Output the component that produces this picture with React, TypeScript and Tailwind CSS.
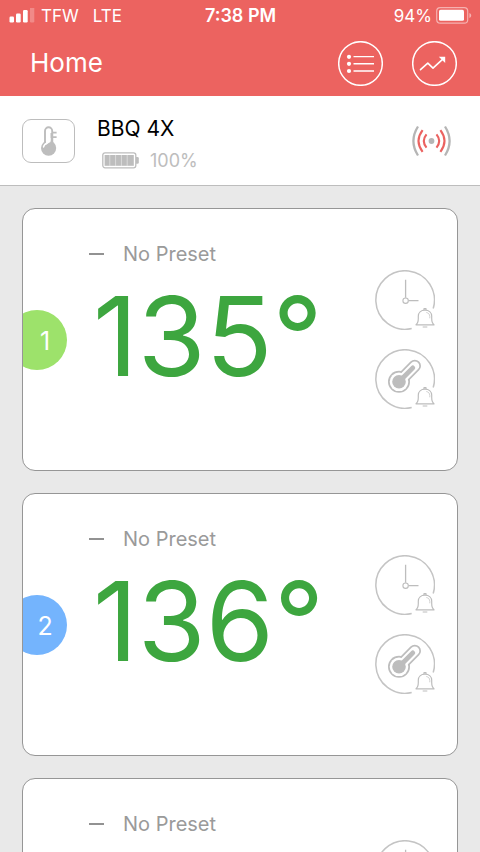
import React from "react";

type Reading = { label: string; temperature: string; badge: string };
type Probe = { id: string; reading?: Reading };

const probes: Probe[] = [
  { id: "probe-a", reading: { label: "1", temperature: "135°", badge: "bg-[#9de26b]" } },
  { id: "probe-b", reading: { label: "2", temperature: "136°", badge: "bg-[#74b4fd]" } },
  { id: "probe-c" },
];

function StatusBar() {
  return (
    <div className="grid h-8 grid-cols-3 items-center pl-[9px] pr-2 text-[17px] leading-5">
      <div className="flex items-center">
        <svg width="26" height="16" viewBox="0 0 26 16" fill="currentColor" aria-hidden="true">
          <rect x="0.5" y="8.5" width="4.5" height="6" rx="1.2" />
          <rect x="7" y="5.5" width="4.7" height="9" rx="1.2" />
          <rect x="14" y="2" width="4.7" height="12.5" rx="1.2" />
          <rect x="21" y="-1" width="4.3" height="15.5" rx="1.2" opacity="0.25" />
        </svg>
        <span className="ml-1.5">TFW</span>
        <span className="ml-3.5">LTE</span>
      </div>
      <div className="text-center text-[18px] font-semibold">7:38 PM</div>
      <div className="flex items-center justify-end gap-1">
        <span>94%</span>
        <svg width="36" height="18" viewBox="0 0 36 18" aria-hidden="true">
          <rect x="0.7" y="0.6" width="31" height="15.6" rx="3.5" fill="none" stroke="#fff" strokeWidth="1.2" opacity="0.5" />
          <rect x="3" y="2.8" width="25" height="11" rx="1.6" fill="#fff" />
          <path d="M33.4 5.9c2.4 1 2.4 4 0 5z" fill="#fff" opacity="0.5" />
        </svg>
      </div>
    </div>
  );
}

function ListIcon() {
  return (
    <svg width="45" height="45" viewBox="0 0 45 45" fill="none" stroke="#fff" aria-hidden="true">
      <circle cx="22.5" cy="22.5" r="21.8" strokeWidth="1.5" />
      <g fill="#fff" stroke="none">
        <circle cx="11" cy="15.8" r="2.1" />
        <circle cx="11" cy="22.8" r="2.1" />
        <circle cx="11" cy="30" r="2.1" />
      </g>
      <path d="M15.5 15.6h20.5M15.5 22.8h20.5M15.5 30h20.5" strokeWidth="1.4" />
    </svg>
  );
}

function TrendIcon() {
  return (
    <svg width="45" height="45" viewBox="0 0 45 45" fill="none" stroke="#fff" aria-hidden="true">
      <circle cx="22.5" cy="22.5" r="21.8" strokeWidth="1.5" />
      <path d="M8.5 28.7l7.3-6.6 5.2 5 9.5-8.8" strokeWidth="1.6" strokeLinejoin="round" strokeLinecap="round" />
      <path d="M26.8 15.7h6.4v6.2z" fill="#fff" stroke="none" />
    </svg>
  );
}

function DeviceIcon() {
  return (
    <svg width="20" height="30" viewBox="0 0 20 30" fill="none" aria-hidden="true">
      <path d="M13.2 18.5V4.9a3.6 3.6 0 0 0-7.2 0v11.9" stroke="#bdbdbd" strokeWidth="1.9" />
      <path d="M13 6.6h4.6M13 11.1h4.6" stroke="#bdbdbd" strokeWidth="1.9" />
      <path d="M11.5 7v10h2.6V7z" fill="#bdbdbd" />
      <circle cx="9.6" cy="22.1" r="7.6" fill="#bdbdbd" />
      <path d="M7 12v6.5l4.5-2.5V12z" fill="#fff" />
      <path d="M4.5 21a5 5 0 0 1 3.6-3.8" stroke="#fff" strokeWidth="1.4" strokeLinecap="round" />
    </svg>
  );
}

function DeviceBattery() {
  return (
    <svg width="38" height="17" viewBox="0 0 38 17" fill="none" aria-hidden="true">
      <rect x="0.8" y="0.8" width="33" height="15" rx="2.2" stroke="#bdbdbd" strokeWidth="1.3" />
      <rect x="2.6" y="3" width="29.2" height="10.8" fill="#bdbdbd" />
      <path d="M7.8 3v11M13.6 3v11M19.4 3v11M25.2 3v11" stroke="#e2e2e2" strokeWidth="0.8" />
      <path d="M34 5h1.5q1.3 0 1.3 1.3v4.2q0 1.3-1.3 1.3H34z" fill="#bdbdbd" />
    </svg>
  );
}

function SignalIcon() {
  return (
    <svg width="40" height="32" viewBox="0 0 40 32" fill="none" aria-label="Signal strength" role="img">
      <circle cx="19.5" cy="16" r="2.9" fill="#b5b5b5" />
      <g stroke="#eb6260" strokeWidth="2.1">
        <path d="M14.5 9.4q-5.4 6.6 0 13.2M24.5 9.4q5.4 6.6 0 13.2" />
        <path d="M10.6 5.2q-8.2 10.8 0 21.6M28.4 5.2q8.2 10.8 0 21.6" />
      </g>
      <path d="M6 1.5q-9.2 14.5 0 29M33 1.5q9.2 14.5 0 29" stroke="#b5b5b5" strokeWidth="2.3" />
    </svg>
  );
}

function AlarmFrame() {
  return (
    <>
      <path d="M36.7 58.6A29.3 29.3 0 1 1 58.2 38.5" stroke="#c4c4c4" strokeWidth="1.5" />
      <g stroke="#bdbdbd" strokeWidth="1.2" strokeLinejoin="round">
        <path d="M41 54.8c2-1.4 2.3-3.1 2.3-6.2v-2.3c0-3.6 2.6-6.1 6.7-6.1s6.7 2.5 6.7 6.1v2.3c0 3.1.3 4.8 2.3 6.2z" />
        <path d="M49 40v-1.3h2V40M47.7 57h4.6" />
        <path d="M51.3 42.5c2.2.4 3.4 1.7 3.5 4v1.8" strokeWidth="0.7" />
      </g>
    </>
  );
}

function TimerIcon() {
  return (
    <svg width="60" height="60" viewBox="0 0 60 60" fill="none" aria-hidden="true">
      <AlarmFrame />
      <path d="M30.6 9.8v18M33.5 30.7h10" stroke="#bdbdbd" strokeWidth="1.3" />
      <circle cx="30.6" cy="30.7" r="2.7" stroke="#bdbdbd" strokeWidth="1.1" />
    </svg>
  );
}

function TemperatureIcon() {
  return (
    <svg width="60" height="60" viewBox="0 0 60 60" fill="none" aria-hidden="true">
      <AlarmFrame />
      <g strokeLinecap="round">
        <path d="M24 32.8L39.8 16.9" stroke="#bdbdbd" strokeWidth="12.4" />
        <circle cx="24" cy="32.8" r="11" fill="#bdbdbd" />
        <path d="M24 32.8L39.8 16.9" stroke="#fff" strokeWidth="9" />
        <circle cx="24" cy="32.8" r="9.3" fill="#fff" />
        <path d="M24 32.8L37.8 18.9" stroke="#bdbdbd" strokeWidth="4.8" />
        <circle cx="24" cy="32.8" r="6.8" fill="#bdbdbd" />
      </g>
    </svg>
  );
}

function ProbeCard({ reading }: { reading?: Reading }) {
  return (
    <section className="flex h-[263px] shrink-0 items-center overflow-hidden rounded-[13px] border border-[#969696] bg-white pr-[22px]">
      <div
        className={`-ml-4 flex size-[60px] shrink-0 items-center justify-center rounded-full pl-4 pt-0.5 text-[25px] leading-8 text-white ${reading ? reading.badge : "bg-[#c4c4c4]"}`}
      >
        {reading?.label}
      </div>
      <div className="flex flex-1 flex-col gap-[27px] self-stretch pl-[22px] pt-[30px]">
        <div className="flex items-center gap-[19px] text-[20px] leading-[30px] text-[#9a9a9a]">
          <span className="h-0.5 w-[15px] bg-[#929292]" />
          <span>No Preset</span>
        </div>
        {reading && (
          <div className="pl-1 text-[110px] leading-[80px] text-[#3da63f]">{reading.temperature}</div>
        )}
      </div>
      <div className="flex flex-col gap-[19px]">
        <button type="button" aria-label="Timer alarm" className="size-[60px]">
          <TimerIcon />
        </button>
        <button type="button" aria-label="Temperature alarm" className="size-[60px]">
          <TemperatureIcon />
        </button>
      </div>
    </section>
  );
}

export default function App() {
  return (
    <div className="flex h-screen flex-col bg-[#e9e9e9] font-['Inter','Liberation_Sans',sans-serif]">
      <header className="shrink-0 bg-[#ec6360] text-white">
        <StatusBar />
        <div className="flex h-16 items-center justify-between pb-0.5 pl-[30px] pr-[23px]">
          <h1 className="text-[26px] leading-8">Home</h1>
          <nav className="flex gap-[29px]">
            <button type="button" aria-label="Device list" className="size-[45px]">
              <ListIcon />
            </button>
            <button type="button" aria-label="Temperature graph" className="size-[45px]">
              <TrendIcon />
            </button>
          </nav>
        </div>
      </header>

      <div className="flex h-[90px] shrink-0 items-center border-b border-[#bdbdbd] bg-white pl-[22px] pr-7">
        <div className="flex h-11 w-[53px] items-center justify-center rounded-[9px] border border-[#bdbdbd]">
          <DeviceIcon />
        </div>
        <div className="ml-[22px] flex-1 pt-2">
          <h2 className="text-[21px] leading-8 text-black">BBQ 4X</h2>
          <div className="flex items-center gap-2.5 pl-[5px] text-[18px] leading-8 text-[#bdbdbd]">
            <DeviceBattery />
            <span>100%</span>
          </div>
        </div>
        <SignalIcon />
      </div>

      <main className="flex min-h-0 flex-1 flex-col gap-[22px] overflow-y-auto p-[22px] [scrollbar-width:none]">
        {probes.map((probe) => (
          <ProbeCard key={probe.id} reading={probe.reading} />
        ))}
      </main>
    </div>
  );
}
